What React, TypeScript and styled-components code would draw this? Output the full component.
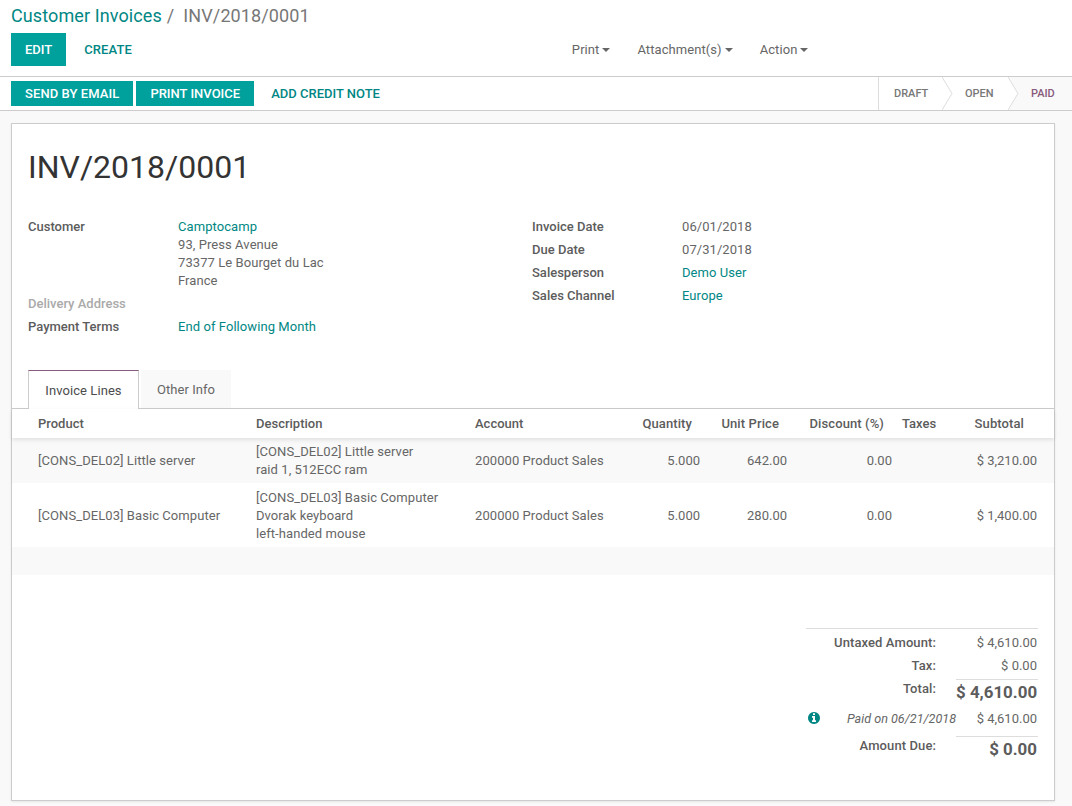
import React from "react";
import styled, { createGlobalStyle } from "styled-components";

const Global = createGlobalStyle`
  html, body { margin: 0; padding: 0; background: #fff; }
  body { font-family: Roboto, "Noto Sans", sans-serif; font-size: 13px; line-height: 18px; letter-spacing: .07px; color: #666; width: 1072px; height: 806px; overflow: hidden; }
`;

const TEAL = "#00A09D";
const LINK = "#008784";
const PURPLE = "#875A7B";
const STRONG = "#5c5c5c";

const Page = styled.div`display: flex; flex-direction: column; height: 806px;`;
const ControlPanel = styled.header`
  height: 77px; box-sizing: border-box; padding: 5px 11px 0; border-bottom: 1px solid #ccc; background: #fff;
`;
const Breadcrumb = styled.div`font-size: 18px; line-height: 22px; height: 28px; display: flex; letter-spacing: .1px;`;
const Crumb = styled.span`color: ${LINK};`;
const Sep = styled.span`color: #777; margin: 0 9px 0 5px;`;
const Current = styled.span`color: #777;`;
const ControlRow = styled.div`display: flex; align-items: center; height: 33px;`;
const Button = styled.button<{ $primary?: boolean; $h?: number; $track?: boolean }>`
  height: ${p => p.$h ?? 33}px; border: 0; border-radius: 0; padding: 0 14px; font: 500 13px/18px Roboto, sans-serif;
  text-transform: uppercase; letter-spacing: ${p => (p.$track ? ".08px" : "0")}; cursor: pointer;
  background: ${p => (p.$primary ? TEAL : "transparent")};
  color: ${p => (p.$primary ? "#fff" : LINK)};
`;
const CreateButton = styled(Button)`margin-left: 4px;`;
const Sidebar = styled.div`display: flex; margin-left: 426px; gap: 27px;`;
const DropItem = styled.span`display: inline-flex; align-items: center; color: #666; font-size: 13px; gap: 3px; font-weight: 400;`;
const Caret = styled.i`width: 0; height: 0; border-top: 4px solid #666; border-left: 4px solid transparent; border-right: 4px solid transparent; margin-top: 1px;`;

const FormView = styled.main`flex: 1; min-height: 0; display: flex; flex-direction: column; background: #f9f9f9;`;
const StatusHeader = styled.div`
  height: 34px; box-sizing: border-box; display: flex; justify-content: space-between; align-items: stretch; background: #fff; border-bottom: 1px solid #ccc; padding-left: 11px;
`;
const HeaderButtons = styled.div`display: flex; align-items: center; gap: 3px;`;
const StatusBar = styled.div`display: flex; border-left: 1px solid #ddd;`;
const Step = styled.div<{ $active?: boolean; $w: number; $pl: number }>`
  position: relative; width: ${p => p.$w}px; box-sizing: border-box; display: flex; align-items: center; padding-left: ${p => p.$pl}px;
  font-weight: 500; text-transform: uppercase; font-size: 11px; letter-spacing: 0; color: ${p => (p.$active ? PURPLE : "#777")};
  background: ${p => (p.$active ? "#f9f9f9" : "#fff")};
`;
const Chevron = styled.svg`position: absolute; right: -11px; top: 0; width: 11px; height: 33px; z-index: 1;`;

const Sheet = styled.section`
  margin: 12px 17px 5px 11px; flex: 1; min-height: 0; background: #fff; border: 1px solid #ccc; box-shadow: 0 1px 2px rgba(0,0,0,.08); box-sizing: border-box; padding-top: 24px;
`;
const Title = styled.h1`font-size: 32px; line-height: 38px; font-weight: 400; letter-spacing: 0; margin: 0 0 0 16px; color: #333; height: 38px;`;
const InfoColumns = styled.div`display: flex; padding: 32px 0 0 16px; height: 134px; box-sizing: border-box;`;
const InfoColumn = styled.div`width: 504px; display: flex; flex-direction: column; gap: 5px;`;
const Field = styled.div`display: flex;`;
const Label = styled.div<{ $muted?: boolean }>`width: 150px; font-weight: 500; letter-spacing: 0; color: ${p => (p.$muted ? "#aaa" : STRONG)};`;
const Value = styled.div`color: #666;`;
const Link = styled.div`color: ${LINK};`;

const Tabs = styled.div`display: flex; height: 39px; box-sizing: border-box; padding-left: 16px; gap: 2px; border-bottom: 1px solid #ccc; margin-top: 50px;`;
const Tab = styled.div<{ $active?: boolean }>`
  box-sizing: border-box; display: flex; align-items: center; justify-content: center; padding-top: 2px;
  ${p => p.$active
    ? `width: 111px; height: 39px; background:#fff; color:#4c4c4c; border:1px solid #ccc; border-top:1px solid ${PURPLE}; border-bottom:0;`
    : `width: 90px; height: 38px; background:#f9f9f9; color:#666;`}
`;

const Table = styled.table`width: 100%; table-layout: fixed; border-collapse: collapse; color: #666;`;
const Head = styled.thead`box-shadow: 0 2px 4px rgba(0,0,0,.1); position: relative;`;
const Th = styled.th<{ $right?: boolean; $pr?: number; $pl?: number }>`
  height: 29px; padding: 0 ${p => p.$pr ?? 5}px 0 ${p => p.$pl ?? 5}px; font-weight: 500; letter-spacing: ${p => (p.$right ? ".1px" : "0")}; color: ${STRONG}; text-align: ${p => (p.$right ? "right" : "left")};
`;
const Row = styled.tr<{ $odd?: boolean; $h: number; $shift?: boolean }>`
  height: ${p => p.$h}px; background: ${p => (p.$odd ? "#f9f9f9" : "#fff")};
  ${p => (p.$shift ? "td { padding-top: 2px; }" : "")}
`;
const Td = styled.td<{ $pl?: number }>`
  padding: 0 5px 0 ${p => p.$pl ?? 5}px; text-align: left; vertical-align: middle;
`;
const NumTd = styled.td<{ $pr?: number }>`
  padding: 0 ${p => p.$pr ?? 5}px 0 5px; text-align: right; vertical-align: middle; letter-spacing: 0;
`;

const Totals = styled.div`
  margin: 53px 0 0 794px; width: 232px; border-top: 1px solid #ddd; display: grid; grid-template-columns: 130px 20px 82px; grid-template-rows: 23px 22px 28px 29px 32px; padding-top: 5px; margin-bottom: 0;
`;
const TotalLabel = styled.div<{ $top?: number }>`grid-column: 1 / 3; padding: ${p => p.$top ?? 0}px 20px 0 0; text-align: right; font-weight: 500; letter-spacing: .1px; color: ${STRONG};`;
const TotalValue = styled.div<{ $top?: number }>`text-align: right; padding-right: 1px; padding-top: ${p => p.$top ?? 0}px; white-space: nowrap; letter-spacing: 0;`;
const BigValue = styled.div`text-align: right; border-top: 1px solid #ddd; font-size: 16.9px; font-weight: 700; letter-spacing: 0; line-height: 24px; padding-right: 1px; white-space: nowrap; color: ${STRONG};`;
const PaidCell = styled.div`grid-column: 1 / 3; display: flex; align-items: flex-start; justify-content: space-between; padding-top: 3px; box-sizing: border-box;`;
const PaidText = styled.em`font-style: italic; font-size: 12.6px; letter-spacing: 0;`;
const InfoIcon = styled.svg`width: 12px; height: 12px; margin: 2px 0 0 2px; fill: ${LINK};`;

export default function App() {
  return (
    <Page>
      <Global />
      <ControlPanel>
        <Breadcrumb>
          <Crumb>Customer Invoices</Crumb><Sep>/</Sep><Current>INV/2018/0001</Current>
        </Breadcrumb>
        <ControlRow>
          <Button $primary>Edit</Button>
          <CreateButton $track>Create</CreateButton>
          <Sidebar>
            <DropItem>Print <Caret /></DropItem>
            <DropItem>Attachment(s) <Caret /></DropItem>
            <DropItem>Action <Caret /></DropItem>
          </Sidebar>
        </ControlRow>
      </ControlPanel>
      <FormView>
        <StatusHeader>
          <HeaderButtons>
            <Button $primary $h={25} $track>Send by Email</Button>
            <Button $primary $h={25}>Print Invoice</Button>
            <Button $h={25}>Add Credit Note</Button>
          </HeaderButtons>
          <StatusBar>
            <Step $w={63} $pl={15}>Draft<Chevron viewBox="0 0 11 33"><path d="M0 0L10 16.5L0 33" fill="#fff" stroke="#ddd" /></Chevron></Step>
            <Step $w={66} $pl={23}>Open<Chevron viewBox="0 0 11 33"><path d="M0 0L10 16.5L0 33" fill="#fff" stroke="#ddd" /></Chevron></Step>
            <Step $active $w={64} $pl={23}>Paid</Step>
          </StatusBar>
        </StatusHeader>
        <Sheet>
          <Title>INV/2018/0001</Title>
          <InfoColumns>
            <InfoColumn>
              <Field><Label>Customer</Label><div><Link>Camptocamp</Link><Value>93, Press Avenue</Value><Value>73377 Le Bourget du Lac</Value><Value>France</Value></div></Field>
              <Field><Label $muted>Delivery Address</Label></Field>
              <Field><Label>Payment Terms</Label><Link>End of Following Month</Link></Field>
            </InfoColumn>
            <InfoColumn>
              <Field><Label>Invoice Date</Label><Value>06/01/2018</Value></Field>
              <Field><Label>Due Date</Label><Value>07/31/2018</Value></Field>
              <Field><Label>Salesperson</Label><Link>Demo User</Link></Field>
              <Field><Label>Sales Channel</Label><Link>Europe</Link></Field>
            </InfoColumn>
          </InfoColumns>
          <Tabs>
            <Tab $active>Invoice Lines</Tab>
            <Tab>Other Info</Tab>
          </Tabs>
          <Table>
            <colgroup>
              <col style={{ width: 239 }} /><col style={{ width: 219 }} /><col style={{ width: 145 }} /><col style={{ width: 90 }} />
              <col style={{ width: 87 }} /><col style={{ width: 105 }} /><col style={{ width: 70 }} /><col />
            </colgroup>
            <Head>
              <tr>
                <Th $pl={26}>Product</Th><Th>Description</Th><Th>Account</Th>
                <Th $right $pr={13}>Quantity</Th><Th $right $pr={13}>Unit Price</Th><Th $right $pr={13}>Discount (%)</Th>
                <Th>Taxes</Th><Th $right $pr={30}>Subtotal</Th>
              </tr>
            </Head>
            <tbody>
              <Row $odd $h={45}>
                <Td $pl={26}>[CONS_DEL02] Little server</Td>
                <Td>[CONS_DEL02] Little server<br />raid 1, 512ECC ram</Td>
                <Td>200000 Product Sales</Td><NumTd>5.000</NumTd><NumTd>642.00</NumTd><NumTd>0.00</NumTd><Td />
                <NumTd $pr={17}>$ 3,210.00</NumTd>
              </Row>
              <Row $h={64} $shift>
                <Td $pl={26}>[CONS_DEL03] Basic Computer</Td>
                <Td>[CONS_DEL03] Basic Computer<br />Dvorak keyboard<br />left-handed mouse</Td>
                <Td>200000 Product Sales</Td><NumTd>5.000</NumTd><NumTd>280.00</NumTd><NumTd>0.00</NumTd><Td />
                <NumTd $pr={17}>$ 1,400.00</NumTd>
              </Row>
              <Row $odd $h={28}><Td colSpan={8} /></Row>
            </tbody>
          </Table>
          <Totals>
            <TotalLabel>Untaxed Amount:</TotalLabel><TotalValue>$ 4,610.00</TotalValue>
            <TotalLabel>Tax:</TotalLabel><TotalValue>$ 0.00</TotalValue>
            <TotalLabel $top={1}>Total:</TotalLabel><BigValue>$ 4,610.00</BigValue>
            <PaidCell>
              <InfoIcon viewBox="0 0 1536 1536"><path d="M1024 1248v-160q0-14-9-23t-23-9h-96V544q0-14-9-23t-23-9H544q-14 0-23 9t-9 23v160q0 14 9 23t23 9h96v320h-96q-14 0-23 9t-9 23v160q0 14 9 23t23 9h448q14 0 23-9t9-23zM896 352V192q0-14-9-23t-23-9H672q-14 0-23 9t-9 23v160q0 14 9 23t23 9h192q14 0 23-9t9-23zm640 416q0 209-103 385.5T1153.5 1433 768 1536t-385.5-103T103 1153.5 0 768t103-385.5T382.5 103 768 0t385.5 103T1433 382.5 1536 768z" /></InfoIcon>
              <PaidText>Paid on 06/21/2018</PaidText>
            </PaidCell>
            <TotalValue $top={3}>$ 4,610.00</TotalValue>
            <TotalLabel $top={1}>Amount Due:</TotalLabel><BigValue>$ 0.00</BigValue>
          </Totals>
        </Sheet>
      </FormView>
    </Page>
  );
}
